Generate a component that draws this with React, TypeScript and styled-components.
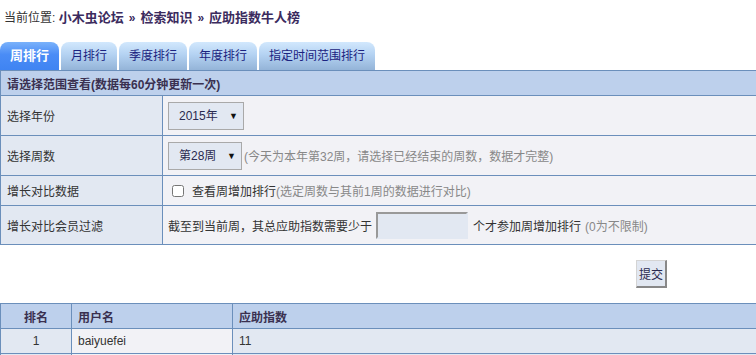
import React from 'react';
import styled, { createGlobalStyle } from 'styled-components';

const GlobalStyle = createGlobalStyle`
  body {
    margin: 0;
    background: #ffffff;
    font-family: "Liberation Sans", "Noto Sans CJK SC", sans-serif;
    font-size: 12px;
    color: #333333;
    overflow: hidden;
  }
`;

const Page = styled.div`
  width: 100%;
`;

const Breadcrumb = styled.div`
  height: 42px;
  box-sizing: border-box;
  padding: 10px 4px 0;
  line-height: 16px;
  font-size: 12px;
  color: #333333;
  white-space: nowrap;
`;

const Crumb = styled.a`
  font-size: 13px;
  font-weight: bold;
  color: #3b2b5e;
  text-decoration: none;
`;

const Sep = styled.span`
  font-weight: bold;
  color: #3b2b5e;
  margin: 0 5px;
`;

const TabBar = styled.div`
  display: flex;
  gap: 2px;
  height: 28px;
`;

const Tab = styled.div<{ $active?: boolean }>`
  height: 28px;
  box-sizing: border-box;
  padding: 0 10px;
  line-height: 28px;
  border-radius: 8px 8px 0 0;
  white-space: nowrap;
  font-size: ${(p) => (p.$active ? '13px' : '12px')};
  font-weight: ${(p) => (p.$active ? 'bold' : 'normal')};
  color: ${(p) => (p.$active ? '#ffffff' : '#1b2380')};
  background: ${(p) =>
    p.$active
      ? 'linear-gradient(to bottom, #7ab2fb 0%, #4a8cf6 45%, #3f84f2 100%)'
      : 'linear-gradient(to bottom, #d2e8fd 0%, #b4d2f2 45%, #94b4d8 100%)'};
`;

const Grid = styled.table`
  width: 100%;
  border-collapse: collapse;
  table-layout: fixed;
`;

const HeadCell = styled.td<{ $align?: string; $h: number }>`
  height: ${(p) => p.$h}px;
  box-sizing: border-box;
  padding: 0 6px;
  background: #bdd0ec;
  border: 1px solid #6b8fbb;
  border-right: none;
  font-weight: bold;
  font-size: 12px;
  color: #3a3050;
  text-align: ${(p) => p.$align || 'left'};
  white-space: nowrap;
`;

const LabelCell = styled.td<{ $h: number }>`
  height: ${(p) => p.$h}px;
  box-sizing: border-box;
  padding: 0 6px;
  background: #e2e8f2;
  border: 1px solid #6b8fbb;
  color: #333333;
  white-space: nowrap;
`;

const ValueCell = styled.td<{ $h: number }>`
  height: ${(p) => p.$h}px;
  box-sizing: border-box;
  padding: 0 5px;
  background: #f2f2f6;
  border: 1px solid #6b8fbb;
  border-right: none;
  color: #333333;
  white-space: nowrap;
`;

const Line = styled.div`
  display: flex;
  align-items: center;
  white-space: nowrap;
`;

const SelectWrap = styled.span<{ $w: number }>`
  position: relative;
  display: inline-block;
  flex-shrink: 0;
  width: ${(p) => p.$w}px;
  height: 28px;
`;

const Select = styled.select`
  appearance: none;
  width: 100%;
  height: 100%;
  box-sizing: border-box;
  border: 1px solid #a9a9a9;
  background: #e2e8f2;
  padding: 0 18px 0 10px;
  font-family: "Liberation Sans", "Noto Sans CJK SC", sans-serif;
  font-size: 12px;
  color: #2a2a50;
  outline: none;
`;

const Arrow = styled.span`
  position: absolute;
  right: 6px;
  top: 9px;
  font-size: 9px;
  line-height: 10px;
  color: #111111;
  pointer-events: none;
`;

const Hint = styled.span<{ $ml?: number }>`
  color: #888888;
  margin-left: ${(p) => p.$ml ?? 0}px;
`;

const Check = styled.input`
  flex-shrink: 0;
  width: 12px;
  height: 12px;
  margin: 0 0 0 4px;
`;

const CheckLabel = styled.span`
  margin-left: 8px;
  color: #333333;
`;

const NumInput = styled.input`
  flex-shrink: 0;
  width: 92px;
  height: 27px;
  box-sizing: border-box;
  margin: 0 5px 0 4px;
  background: #e2e8f2;
  border: 2px solid #e2e8f2;
  border-top-color: #999999;
  border-left-color: #999999;
  outline: none;
`;

const Actions = styled.div`
  display: flex;
  justify-content: flex-end;
  padding: 15px 89px 15px 0;
`;

const Submit = styled.button`
  width: 31px;
  height: 28px;
  box-sizing: border-box;
  padding: 0;
  background: #e2e8f2;
  border: 2px solid #888888;
  border-top: 1px solid #d4d4d4;
  border-left: 1px solid #d4d4d4;
  font-family: "Liberation Sans", "Noto Sans CJK SC", sans-serif;
  font-size: 12px;
  color: #2a2a50;
`;

const DataCell = styled.td<{ $tint?: boolean; $align?: string }>`
  height: 25px;
  box-sizing: border-box;
  padding: 0 6px;
  background: ${(p) => (p.$tint ? '#e2e8f2' : '#f2f2f6')};
  border: 1px solid #6b8fbb;
  border-right: none;
  color: #333333;
  text-align: ${(p) => p.$align || 'left'};
`;

const ranks = [
  { id: 'r1', rank: '1', name: 'baiyuefei', score: '11' },
  { id: 'r2', rank: '', name: '', score: '' },
];

export default function App() {
  return (
    <Page>
      <GlobalStyle />
      <Breadcrumb>
        当前位置: <Crumb>小木虫论坛</Crumb>
        <Sep>»</Sep>
        <Crumb>检索知识</Crumb>
        <Sep>»</Sep>
        <Crumb>应助指数牛人榜</Crumb>
      </Breadcrumb>

      <TabBar>
        <Tab $active>周排行</Tab>
        <Tab>月排行</Tab>
        <Tab>季度排行</Tab>
        <Tab>年度排行</Tab>
        <Tab>指定时间范围排行</Tab>
      </TabBar>

      <Grid>
        <colgroup>
          <col style={{ width: 162 }} />
          <col />
        </colgroup>
        <tbody>
          <tr>
            <HeadCell colSpan={2} $h={25}>
              请选择范围查看(数据每60分钟更新一次)
            </HeadCell>
          </tr>
          <tr>
            <LabelCell $h={40}>选择年份</LabelCell>
            <ValueCell $h={40}>
              <Line>
                <SelectWrap $w={76}>
                  <Select defaultValue="2015">
                    <option value="2015">2015年</option>
                  </Select>
                  <Arrow>▼</Arrow>
                </SelectWrap>
              </Line>
            </ValueCell>
          </tr>
          <tr>
            <LabelCell $h={40}>选择周数</LabelCell>
            <ValueCell $h={40}>
              <Line>
                <SelectWrap $w={74}>
                  <Select defaultValue="28">
                    <option value="28">第28周</option>
                  </Select>
                  <Arrow>▼</Arrow>
                </SelectWrap>
                <Hint $ml={2}>(今天为本年第32周，请选择已经结束的周数，数据才完整)</Hint>
              </Line>
            </ValueCell>
          </tr>
          <tr>
            <LabelCell $h={30}>增长对比数据</LabelCell>
            <ValueCell $h={30}>
              <Line>
                <Check type="checkbox" />
                <CheckLabel>查看周增加排行</CheckLabel>
                <Hint>(选定周数与其前1周的数据进行对比)</Hint>
              </Line>
            </ValueCell>
          </tr>
          <tr>
            <LabelCell $h={39}>增长对比会员过滤</LabelCell>
            <ValueCell $h={39}>
              <Line>
                截至到当前周，其总应助指数需要少于
                <NumInput type="text" />
                个才参加周增加排行
                <Hint $ml={4}>(0为不限制)</Hint>
              </Line>
            </ValueCell>
          </tr>
        </tbody>
      </Grid>

      <Actions>
        <Submit>提交</Submit>
      </Actions>

      <Grid>
        <colgroup>
          <col style={{ width: 71 }} />
          <col style={{ width: 161 }} />
          <col />
        </colgroup>
        <tbody>
          <tr>
            <HeadCell $h={25} $align="center">排名</HeadCell>
            <HeadCell $h={25}>用户名</HeadCell>
            <HeadCell $h={25}>应助指数</HeadCell>
          </tr>
          {ranks.map((r) => (
            <tr key={r.id}>
              <DataCell $tint $align="center">{r.rank}</DataCell>
              <DataCell>{r.name}</DataCell>
              <DataCell $tint>{r.score}</DataCell>
            </tr>
          ))}
        </tbody>
      </Grid>
    </Page>
  );
}
